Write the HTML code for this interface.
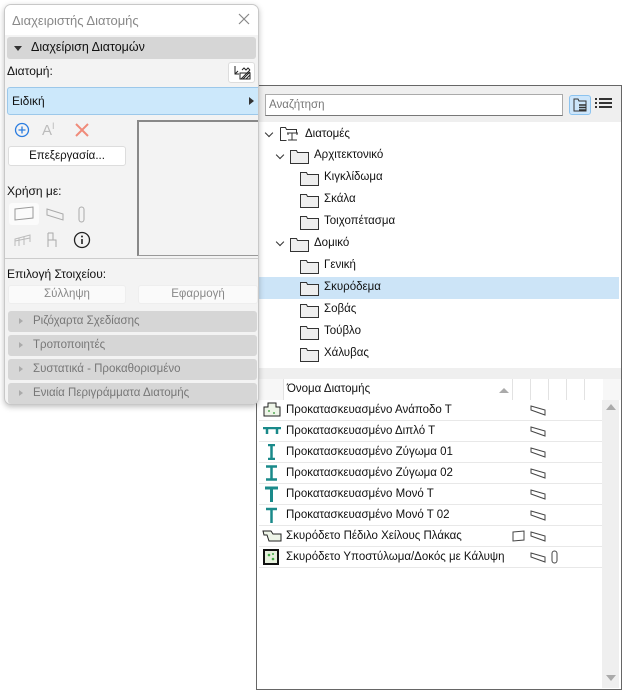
<!DOCTYPE html>
<html><head><meta charset="utf-8"><style>
*{box-sizing:border-box;margin:0;padding:0}
body{width:626px;height:693px;background:#fff;position:relative;overflow:hidden;font-family:"Liberation Sans","DejaVu Sans",sans-serif;font-size:11.5px;color:#111}
.abs{position:absolute}
#right{left:256px;top:85px;width:366px;height:605px;border:1px solid #666;background:#fff}
#left{left:4px;top:4px;width:255px;height:401px;border:1px solid #c8c8c8;border-radius:7px;background:#f3f3f3;box-shadow:0 2px 6px rgba(0,0,0,.25);overflow:hidden}
.chev{position:absolute;width:6px;height:6px;border-right:1.5px solid #333;border-bottom:1.5px solid #333;transform:rotate(45deg)}
.row{position:absolute;left:2px;width:343px;height:21px;line-height:20px;border-bottom:1px solid #e8e8e8}
.row .n{position:absolute;left:27px}
.sec{position:absolute;left:3px;width:249px;height:21px;background:#d6d6d6;border-radius:3px;color:#777;line-height:21px;padding-left:25px;font-size:11.5px}
.sec:before{content:"";position:absolute;left:11px;top:7px;border-left:4px solid #aaa;border-top:3.5px solid transparent;border-bottom:3.5px solid transparent}
.btn{position:absolute;background:#fafafa;border:1px solid #ddd;border-radius:3px;text-align:center;height:19px;line-height:17px}
</style></head><body>

<div id="right" class="abs">
 <div class="abs" style="left:0;top:0;width:364px;height:36px;background:#efefef"></div>
 <div class="abs" style="left:8px;top:8px;width:298px;height:22px;background:#fff;border:1px solid #aaa;border-bottom-color:#777;color:#777;line-height:20px;padding-left:3px">Αναζήτηση</div>
 <div class="abs" style="left:312px;top:9px;width:22px;height:20px;background:#cde6fb;border:1px solid #8cc3ef;border-radius:3px"></div>
 <svg class="abs" style="left:313px;top:10px" width="20" height="18"><path d="M4 3h4l1 2h7v10H4z" fill="none" stroke="#333"/><path d="M9 9h7M9 11.5h7M9 14h7" stroke="#333" stroke-width="1.4"/></svg>
 <svg class="abs" style="left:338px;top:12px" width="18" height="12"><path d="M0 1h2M4 1h13M0 5h2M4 5h13M0 9h2M4 9h13" stroke="#333" stroke-width="2"/></svg>

 <div class="abs" style="left:2px;top:191px;width:360px;height:22px;background:#cce4f7"></div>
 <div class="abs" style="left:0;top:282px;width:364px;height:12px;background:#efefef"></div>

 <div class="chev" style="left:9px;top:44px"></div>
 <svg class="abs" style="left:23px;top:41px" width="22" height="15"><path d="M0.5 0.5h5l1 2h10v3M0.5 0.5v13h6" fill="none" stroke="#333"/><path d="M7 6h11M12 6v7M8 13h9M8 6v2M17 6v2" fill="none" stroke="#333"/></svg>
 <div class="abs" style="left:48px;top:42px">Διατομές</div>
 <div class="chev" style="left:20px;top:66px"></div>
</div>

<div class="abs" style="left:256px;top:85px;width:366px;height:290px">
 <svg class="abs" style="left:34px;top:64px" width="20" height="15"><path d="M0.5 1.5h6l1 2h11v11H0.5z" fill="#eee" stroke="#333"/></svg>
 <div class="abs" style="left:58px;top:64px">Αρχιτεκτονικό</div>
 <svg class="abs" style="left:44px;top:86px" width="20" height="15"><path d="M0.5 1.5h6l1 2h11v11H0.5z" fill="#eee" stroke="#333"/></svg>
 <div class="abs" style="left:68px;top:86px">Κιγκλίδωμα</div>
 <svg class="abs" style="left:44px;top:108px" width="20" height="15"><path d="M0.5 1.5h6l1 2h11v11H0.5z" fill="#eee" stroke="#333"/></svg>
 <div class="abs" style="left:68px;top:108px">Σκάλα</div>
 <svg class="abs" style="left:44px;top:130px" width="20" height="15"><path d="M0.5 1.5h6l1 2h11v11H0.5z" fill="#eee" stroke="#333"/></svg>
 <div class="abs" style="left:68px;top:130px">Τοιχοπέτασμα</div>
 <div class="chev" style="left:21px;top:154px"></div>
 <svg class="abs" style="left:34px;top:152px" width="20" height="15"><path d="M0.5 1.5h6l1 2h11v11H0.5z" fill="#eee" stroke="#333"/></svg>
 <div class="abs" style="left:58px;top:152px">Δομικό</div>
 <svg class="abs" style="left:44px;top:174px" width="20" height="15"><path d="M0.5 1.5h6l1 2h11v11H0.5z" fill="#eee" stroke="#333"/></svg>
 <div class="abs" style="left:68px;top:174px">Γενική</div>
 <svg class="abs" style="left:44px;top:196px" width="20" height="15"><path d="M0.5 1.5h6l1 2h11v11H0.5z" fill="#eee" stroke="#333"/></svg>
 <div class="abs" style="left:68px;top:196px">Σκυρόδεμα</div>
 <svg class="abs" style="left:44px;top:218px" width="20" height="15"><path d="M0.5 1.5h6l1 2h11v11H0.5z" fill="#eee" stroke="#333"/></svg>
 <div class="abs" style="left:68px;top:218px">Σοβάς</div>
 <svg class="abs" style="left:44px;top:240px" width="20" height="15"><path d="M0.5 1.5h6l1 2h11v11H0.5z" fill="#eee" stroke="#333"/></svg>
 <div class="abs" style="left:68px;top:240px">Τούβλο</div>
 <svg class="abs" style="left:44px;top:262px" width="20" height="15"><path d="M0.5 1.5h6l1 2h11v11H0.5z" fill="#eee" stroke="#333"/></svg>
 <div class="abs" style="left:68px;top:262px">Χάλυβας</div>
</div>

<div class="abs" style="left:257px;top:379px;width:364px;height:310px">
 <div class="abs" style="left:0;top:0;width:364px;height:21px;background:#f7f7f7"></div>
 <div class="abs" style="left:26px;top:0;width:320px;height:21px;background:#fff;border-left:1px solid #e2e2e2"></div>
 <div class="abs" style="left:30px;top:4px">Όνομα Διατομής</div>
 <div class="abs" style="left:242px;top:9px;border-bottom:5px solid #aaa;border-left:5px solid transparent;border-right:5px solid transparent"></div>
 <div class="abs" style="left:255px;top:0;width:1px;height:21px;background:#e2e2e2"></div>
 <div class="abs" style="left:273px;top:0;width:1px;height:21px;background:#e2e2e2"></div>
 <div class="abs" style="left:291px;top:0;width:1px;height:21px;background:#e2e2e2"></div>
 <div class="abs" style="left:309px;top:0;width:1px;height:21px;background:#e2e2e2"></div>
 <div class="abs" style="left:327px;top:0;width:1px;height:21px;background:#e2e2e2"></div>
 <div class="abs" style="left:345px;top:21px;width:17px;height:288px;background:#efefef"></div>
 <div class="abs" style="left:349px;top:25px;border-bottom:6px solid #aaa;border-left:5px solid transparent;border-right:5px solid transparent"></div>
 <div class="abs" style="left:349px;top:296px;border-top:6px solid #aaa;border-left:5px solid transparent;border-right:5px solid transparent"></div>

 <div class="row" style="top:21px"><svg class="abs" style="left:4px;top:2px" width="18" height="15"><path d="M5 1h8v4h4v9H1V5h4z" fill="#eef5e8" stroke="#222"/><circle cx="6" cy="9" r="1" fill="#5a5"/><circle cx="11" cy="11" r="1" fill="#5a5"/></svg><span class="n">Προκατασκευασμένο Ανάποδο Τ</span></div>
 <div class="row" style="top:42px"><svg class="abs" style="left:4px;top:6px" width="18" height="8"><path d="M0 1h18M4 1v6M14 1v6" stroke="#1a8a8a" stroke-width="2.5"/></svg><span class="n">Προκατασκευασμένο Διπλό Τ</span></div>
 <div class="row" style="top:63px"><svg class="abs" style="left:8px;top:2px" width="10" height="16"><path d="M1 1h7M1 15h7M4.5 1v14" stroke="#1a8a8a" stroke-width="2.5"/></svg><span class="n">Προκατασκευασμένο Ζύγωμα 01</span></div>
 <div class="row" style="top:84px"><svg class="abs" style="left:7px;top:2px" width="12" height="16"><path d="M0 1.5h11M0 14.5h11M5.5 1v14" stroke="#1a8a8a" stroke-width="2.5"/></svg><span class="n">Προκατασκευασμένο Ζύγωμα 02</span></div>
 <div class="row" style="top:105px"><svg class="abs" style="left:6px;top:2px" width="14" height="16"><path d="M0 2h13M6.5 2v14" stroke="#1a8a8a" stroke-width="3"/></svg><span class="n">Προκατασκευασμένο Μονό Τ</span></div>
 <div class="row" style="top:126px"><svg class="abs" style="left:7px;top:2px" width="12" height="16"><path d="M0 2h11M5.5 2v14" stroke="#1a8a8a" stroke-width="2.5"/></svg><span class="n">Προκατασκευασμένο Μονό Τ 02</span></div>
 <div class="row" style="top:147px"><svg class="abs" style="left:3px;top:3px" width="20" height="14"><path d="M1 2h8l2 3h8v7H7L5 6H2z" fill="#eef5e8" stroke="#222"/></svg><span class="n">Σκυρόδετο Πέδιλο Χείλους Πλάκας</span></div>
 <div class="row" style="top:168px"><svg class="abs" style="left:4px;top:2px" width="16" height="16"><rect x="1" y="1" width="14" height="14" fill="#e6f0dc" stroke="#111" stroke-width="2"/><circle cx="6" cy="6" r="1.3" fill="#4a4"/><circle cx="10" cy="10" r="1.3" fill="#4a4"/><circle cx="10" cy="5" r="1" fill="#4a4"/></svg><span class="n">Σκυρόδετο Υποστύλωμα/Δοκός με Κάλυψη</span></div>
</div>
<svg class="abs" style="left:529px;top:405px" width="18" height="170"><g fill="none" stroke="#444"><path d="M2 1l14 4v5L2 5z"/><path d="M2 22l14 4v5L2 26z"/><path d="M2 43l14 4v5L2 47z"/><path d="M2 64l14 4v5L2 68z"/><path d="M2 85l14 4v5L2 89z"/><path d="M2 106l14 4v5L2 110z"/><path d="M2 127l14 4v5L2 131z"/><path d="M2 148l14 4v5L2 152z"/></g></svg>
<svg class="abs" style="left:512px;top:530px" width="14" height="12"><path d="M1 2l11-1v9l-11 1z" fill="none" stroke="#444"/></svg>
<svg class="abs" style="left:551px;top:550px" width="8" height="15"><rect x="1" y="1" width="5" height="12" rx="2.5" fill="none" stroke="#444"/></svg>

<div id="left" class="abs">
 <div class="abs" style="left:0;top:0;width:255px;height:30px;background:#fff"></div>
 <div class="abs" style="left:7px;top:8px;color:#888;font-size:13px">Διαχειριστής Διατομής</div>
 <svg class="abs" style="left:233px;top:8px" width="12" height="12"><path d="M1 1l10 10M11 1L1 11" stroke="#888" stroke-width="1.2"/></svg>
 <div class="abs" style="left:2px;top:32px;width:249px;height:22px;background:#d6d6d6;border-radius:3px"></div>
 <div class="abs" style="left:9px;top:41px;border-top:5px solid #333;border-left:4px solid transparent;border-right:4px solid transparent"></div>
 <div class="abs" style="left:26px;top:35px;font-size:12.5px">Διαχείριση Διατομών</div>
 <div class="abs" style="left:2px;top:59px;font-size:12px">Διατομή:</div>
 <div class="btn" style="left:223px;top:57px;width:27px;height:21px;background:#fff"></div>
 <svg class="abs" style="left:227px;top:60px" width="20" height="16"><path d="M3 1v8h4M3 9l3-3" fill="none" stroke="#222"/><path d="M10 5l2-2 2 2 2-2 2 2M9 14l9-9M11 14l7-7M14 14l4-4" stroke="#222" fill="none"/><rect x="8" y="8" width="10" height="6" fill="none" stroke="#222"/></svg>
 <div class="abs" style="left:2px;top:82px;width:254px;height:28px;background:#cce8fb;border:1px solid #9cc8ea;border-radius:3px"></div>
 <div class="abs" style="left:7px;top:89px;font-size:12px">Ειδική</div>
 <div class="abs" style="left:244px;top:92px;border-left:5px solid #333;border-top:4px solid transparent;border-bottom:4px solid transparent"></div>
 <div class="abs" style="left:132px;top:115px;width:123px;height:136px;background:#f3f3f3;border:1px solid #999;border-top:2px solid #888;border-left:2px solid #888"></div>
 <svg class="abs" style="left:9px;top:117px" width="16" height="16"><circle cx="8" cy="8" r="6.5" fill="none" stroke="#2a7ce0" stroke-width="1.3"/><path d="M8 4.5v7M4.5 8h7" stroke="#2a7ce0" stroke-width="1.3"/></svg>
 <div class="abs" style="left:37px;top:116px;color:#bbb;font-size:15px">A<sup style="font-size:9px">I</sup></div>
 <svg class="abs" style="left:70px;top:118px" width="14" height="14"><path d="M1 1l12 12M13 1L1 13" stroke="#f08b7a" stroke-width="2"/></svg>
 <div class="btn" style="left:3px;top:141px;width:118px;height:20px;background:#fff;line-height:18px">Επεξεργασία...</div>
 <div class="abs" style="left:2px;top:179px;font-size:12px">Χρήση με:</div>
 <div class="abs" style="left:4px;top:198px;width:30px;height:22px;background:#fbfbfb;border-radius:3px"></div>
 <svg class="abs" style="left:8px;top:201px" width="24" height="16"><path d="M2 3l18-2v11L2 14z" fill="none" stroke="#999"/></svg>
 <svg class="abs" style="left:40px;top:203px" width="20" height="14"><path d="M2 1l16 5v6L2 7z" fill="none" stroke="#aaa"/></svg>
 <svg class="abs" style="left:73px;top:201px" width="8" height="18"><rect x="1" y="1" width="5" height="15" rx="2.5" fill="none" stroke="#aaa"/></svg>
 <svg class="abs" style="left:9px;top:228px" width="18" height="14"><path d="M1 13V6l15-4v7M5 5v8M10 4v8M1 8l15-3" fill="none" stroke="#bbb"/></svg>
 <svg class="abs" style="left:41px;top:227px" width="14" height="16"><path d="M2 1v14M2 8h8v7M2 1h5v7" fill="none" stroke="#aaa"/></svg>
 <svg class="abs" style="left:68px;top:226px" width="18" height="18"><circle cx="9" cy="9" r="7.5" fill="none" stroke="#222" stroke-width="1.3"/><path d="M9 8v5" stroke="#222" stroke-width="1.6"/><circle cx="9" cy="5.5" r="1" fill="#222"/></svg>
 <div class="abs" style="left:0;top:253px;width:255px;height:1px;background:#ccc"></div>
 <div class="abs" style="left:2px;top:262px;font-size:12px">Επιλογή Στοιχείου:</div>
 <div class="btn" style="left:3px;top:280px;width:118px;color:#888;border-color:#eee">Σύλληψη</div>
 <div class="btn" style="left:133px;top:280px;width:120px;color:#888;border-color:#eee">Εφαρμογή</div>
 <div class="sec" style="top:306px">Ριζόχαρτα Σχεδίασης</div>
 <div class="sec" style="top:330px">Τροποποιητές</div>
 <div class="sec" style="top:354px">Συστατικά - Προκαθορισμένο</div>
 <div class="sec" style="top:378px">Ενιαία Περιγράμματα Διατομής</div>
</div>
</body></html>
